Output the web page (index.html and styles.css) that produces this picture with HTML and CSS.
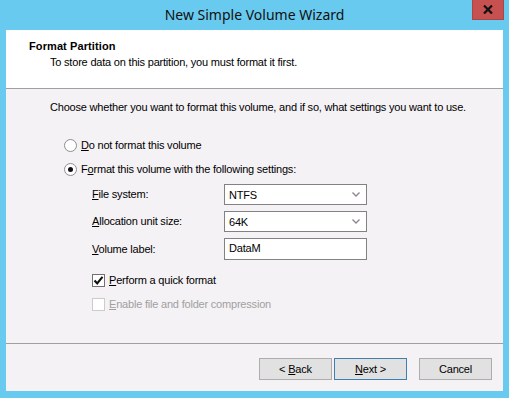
FILE: index.html
```html
<!DOCTYPE html>
<html>
<head>
<meta charset="utf-8">
<link rel="stylesheet" href="styles.css">
</head>
<body>
<div class="window">
  <div class="titlebar">
    <div class="title">New Simple Volume Wizard</div>
    <div class="close">
      <svg width="10" height="9" viewBox="0 0 10 9"><path d="M1 0.5 L9 8.5 M9 0.5 L1 8.5" stroke="#111" stroke-width="2.2" fill="none"/></svg>
    </div>
  </div>
  <div class="client">
    <div class="header">
      <div class="h-title">Format Partition</div>
      <div class="h-sub">To store data on this partition, you must format it first.</div>
    </div>
    <div class="body">
      <div class="intro">Choose whether you want to format this volume, and if so, what settings you want to use.</div>
      <div class="radio-row first">
        <span class="radio"></span>
        <span><u>D</u>o not format this volume</span>
      </div>
      <div class="radio-row second">
        <span class="radio checked"><span class="dot"></span></span>
        <span>F<u>o</u>rmat this volume with the following settings:</span>
      </div>
      <div class="fields">
        <div class="lbl"><u>F</u>ile system:</div>
        <div class="combo"><span>NTFS</span>
          <svg width="8" height="5" viewBox="0 0 8 5"><path d="M0.5 0.5 L4 4 L7.5 0.5" stroke="#8a8a8a" stroke-width="1.4" fill="none"/></svg>
        </div>
        <div class="lbl"><u>A</u>llocation unit size:</div>
        <div class="combo"><span>64K</span>
          <svg width="8" height="5" viewBox="0 0 8 5"><path d="M0.5 0.5 L4 4 L7.5 0.5" stroke="#8a8a8a" stroke-width="1.4" fill="none"/></svg>
        </div>
        <div class="lbl"><u>V</u>olume label:</div>
        <div class="textbox tall">DataM</div>
      </div>
      <div class="check-row first">
        <span class="check">
          <svg width="11" height="11" viewBox="0 0 11 11"><path d="M1.5 5.5 L4.2 8.3 L9.5 1.8" stroke="#111" stroke-width="2.1" fill="none"/></svg>
        </span>
        <span><u>P</u>erform a quick format</span>
      </div>
      <div class="check-row second disabled">
        <span class="check"></span>
        <span><u>E</u>nable file and folder compression</span>
      </div>
    </div>
    <div class="footer">
      <button class="btn">&lt; <u>B</u>ack</button>
      <button class="btn default"><u>N</u>ext &gt;</button>
      <button class="btn cancel">Cancel</button>
    </div>
  </div>
</div>
</body>
</html>
```
FILE: styles.css
```css
* { box-sizing: border-box; }
html, body { margin: 0; padding: 0; }
body {
  width: 509px;
  height: 398px;
  overflow: hidden;
  font-family: "Liberation Sans", Arial, sans-serif;
  font-size: 11px;
  letter-spacing: -0.2px;
  color: #000;
}
u { text-decoration: underline; text-underline-offset: 1px; }
.window {
  width: 509px;
  height: 398px;
  background: #69caef;
  display: flex;
  flex-direction: column;
  padding: 0 6px 7px 6px;
}
.titlebar {
  height: 30px;
  flex: none;
  position: relative;
  display: flex;
  justify-content: center;
  align-items: center;
}
.title {
  font-family: "Noto Sans", "Open Sans", sans-serif;
  font-size: 14px;
  letter-spacing: 0;
  color: #111;
  margin-top: -1px;
}
.close {
  position: absolute;
  top: 0;
  right: -1px;
  width: 32px;
  height: 20px;
  background: #c75050;
  border: 1px solid #a84646;
  border-top: none;
  display: flex;
  align-items: center;
  justify-content: center;
}
.client {
  flex: 1;
  background: #f5f2f5;
  display: flex;
  flex-direction: column;
}
.header {
  height: 59px;
  background: #fff;
  border-bottom: 1px solid #a0a0a0;
  padding: 10px 0 0 23px;
  flex: none;
}
.h-title { font-weight: bold; line-height: 13px; letter-spacing: 0.1px; }
.h-sub { line-height: 13px; padding-left: 21px; margin-top: 3px; }
.body {
  height: 255px;
  flex: none;
  border-bottom: 1px solid #a0a0a0;
  padding: 12px 0 0 44px;
}
.intro { line-height: 13px; }
.radio-row {
  display: flex;
  align-items: center;
  gap: 4px;
  height: 16px;
  margin-left: 14px;
}
.radio-row.first { margin-top: 23px; }
.radio-row.second { margin-top: 8px; }
.radio {
  width: 13px;
  height: 13px;
  border-radius: 50%;
  border: 1px solid #8e8e8e;
  background: #fff;
  display: flex;
  align-items: center;
  justify-content: center;
}
.dot {
  width: 5px;
  height: 5px;
  border-radius: 50%;
  background: #111;
}
.fields {
  display: grid;
  grid-template-columns: 132px 143px;
  grid-template-rows: 21px 21px 22px;
  row-gap: 6px;
  margin: 7px 0 0 42px;
  align-items: center;
}
.lbl { line-height: 13px; }
.combo, .textbox {
  height: 100%;
  border: 1px solid #828282;
  background: #fff;
  display: flex;
  align-items: center;
  justify-content: space-between;
  padding: 0 6px 0 4px;
}
.textbox { align-items: flex-start; padding-top: 3px; }
.check-row {
  display: flex;
  align-items: center;
  gap: 4px;
  height: 16px;
  margin-left: 42px;
}
.check-row.first { margin-top: 12px; }
.check-row.second { margin-top: 8px; }
.check {
  width: 13px;
  height: 13px;
  border: 1px solid #707070;
  background: #fff;
  display: flex;
  align-items: center;
  justify-content: center;
}
.disabled { color: #a0a0a0; }
.disabled .check { border-color: #cccccc; }
.footer {
  flex: 1;
  display: flex;
  justify-content: flex-end;
  align-items: flex-start;
  padding: 14px 11px 0 0;
  gap: 2px;
}
.btn {
  width: 73px;
  height: 22px;
  background: #e1e1e1;
  border: 1px solid #adadad;
  font-family: "Liberation Sans", Arial, sans-serif;
  font-size: 11px;
  letter-spacing: -0.2px;
  color: #000;
  padding: 0;
}
.btn.default { border-color: #3c7fb1; }
.btn.cancel { margin-left: 10px; }
```
